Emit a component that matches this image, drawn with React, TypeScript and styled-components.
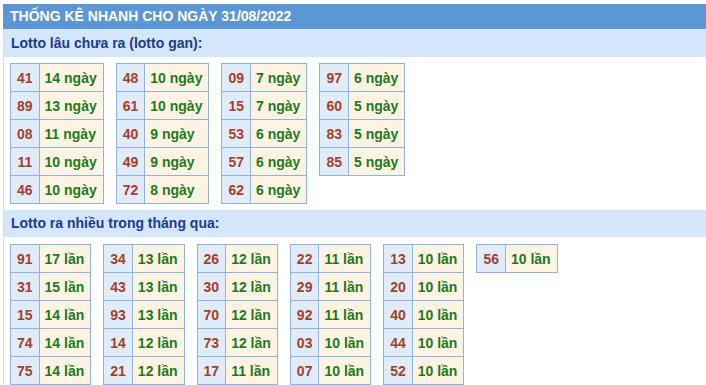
import * as React from 'react';
import styled, { createGlobalStyle } from 'styled-components';

type Pair = [string, string];

const GlobalStyle = createGlobalStyle`
  html, body {
    margin: 0;
    padding: 0;
    background: #fff;
    overflow: hidden;
  }
  body {
    font-family: 'Liberation Sans', Arial, sans-serif;
  }
`;

const Box = styled.div`
  margin: 4px 0 0 3px;
  border-left: 1px solid #d5dde8;
  min-height: 381px;
`;

const Title = styled.div`
  height: 25px;
  line-height: 25px;
  margin-left: -1px;
  padding-left: 7px;
  background: #5c96d4;
  color: #fff;
  font-weight: bold;
  font-size: 14px;
`;

const Heading = styled.div<{ $h: number }>`
  height: ${(p) => p.$h}px;
  line-height: ${(p) => p.$h}px;
  padding-left: 7px;
  background: #d4e7fa;
  color: #1b3b8e;
  font-weight: bold;
  font-size: 14px;
`;

const Groups = styled.div<{ $top: number }>`
  display: flex;
  align-items: flex-start;
  gap: 12px;
  padding: ${(p) => p.$top}px 0 6px 6px;
`;

const Table = styled.table`
  border-collapse: collapse;
  font-size: 14px;
  font-weight: bold;
`;

const Num = styled.td`
  height: 27px;
  padding: 0 6px;
  text-align: center;
  border: 1px solid #90b2e0;
  background: #e1ecfb;
  color: #a43f28;
`;

const Val = styled.td`
  height: 27px;
  padding: 0 6px 0 5px;
  border: 1px solid #90b2e0;
  background: #fff4e3;
  color: #1c7a1e;
  white-space: nowrap;
`;

const gan: Pair[][] = [
  [['41', '14 ngày'], ['89', '13 ngày'], ['08', '11 ngày'], ['11', '10 ngày'], ['46', '10 ngày']],
  [['48', '10 ngày'], ['61', '10 ngày'], ['40', '9 ngày'], ['49', '9 ngày'], ['72', '8 ngày']],
  [['09', '7 ngày'], ['15', '7 ngày'], ['53', '6 ngày'], ['57', '6 ngày'], ['62', '6 ngày']],
  [['97', '6 ngày'], ['60', '5 ngày'], ['83', '5 ngày'], ['85', '5 ngày']],
];

const nhieu: Pair[][] = [
  [['91', '17 lần'], ['31', '15 lần'], ['15', '14 lần'], ['74', '14 lần'], ['75', '14 lần']],
  [['34', '13 lần'], ['43', '13 lần'], ['93', '13 lần'], ['14', '12 lần'], ['21', '12 lần']],
  [['26', '12 lần'], ['30', '12 lần'], ['70', '12 lần'], ['73', '12 lần'], ['17', '11 lần']],
  [['22', '11 lần'], ['29', '11 lần'], ['92', '11 lần'], ['03', '10 lần'], ['07', '10 lần']],
  [['13', '10 lần'], ['20', '10 lần'], ['40', '10 lần'], ['44', '10 lần'], ['52', '10 lần']],
  [['56', '10 lần']],
];

const StatTable = ({ rows }: { rows: Pair[] }) => (
  <Table>
    <tbody>
      {rows.map(([n, v]) => (
        <tr key={n}>
          <Num>{n}</Num>
          <Val>{v}</Val>
        </tr>
      ))}
    </tbody>
  </Table>
);

const App = () => (
  <>
    <GlobalStyle />
    <Box>
      <Title>THỐNG KÊ NHANH CHO NGÀY 31/08/2022</Title>
      <Heading $h={28}>Lotto lâu chưa ra (lotto gan):</Heading>
      <Groups $top={6}>
        {gan.map((g, i) => (
          <StatTable key={i} rows={g} />
        ))}
      </Groups>
      <Heading $h={27}>Lotto ra nhiều trong tháng qua:</Heading>
      <Groups $top={7}>
        {nhieu.map((g, i) => (
          <StatTable key={i} rows={g} />
        ))}
      </Groups>
    </Box>
  </>
);

export default App;
